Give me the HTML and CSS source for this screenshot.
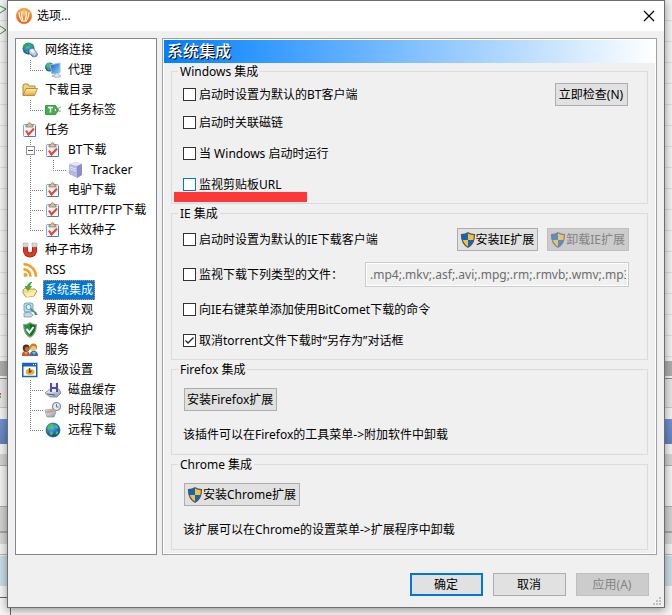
FILE: index.html
```html
<!DOCTYPE html>
<html lang="zh-CN">
  <head>
    <meta charset="utf-8">
    <title>选项...</title>
    <meta name="viewport" content="width=device-width, initial-scale=1">
    <link rel="stylesheet" href="styles.css">
  </head>
  <body>
    <!-- Icon sprite -->
    <svg class="sprite" width="0" height="0" aria-hidden="true">
      <defs>
        <radialGradient id="g-globe" cx=".4" cy=".3" r=".8">
          <stop offset="0" stop-color="#5fc0f8"/><stop offset=".6" stop-color="#1767c4"/><stop offset="1" stop-color="#0b3577"/>
        </radialGradient>
        <radialGradient id="g-logo" cx=".5" cy=".25" r=".8">
          <stop offset="0" stop-color="#ffc46a"/><stop offset=".6" stop-color="#fa7d1c"/><stop offset="1" stop-color="#dc4a10"/>
        </radialGradient>
        <linearGradient id="g-folder" x2="0" y2="1">
          <stop offset="0" stop-color="#fff3b4"/><stop offset="1" stop-color="#e5a93a"/>
        </linearGradient>
        <linearGradient id="g-metal" x2="1" y2="1">
          <stop offset="0" stop-color="#fff"/><stop offset="1" stop-color="#8492b0"/>
        </linearGradient>
        <linearGradient id="g-screen" x2="1" y2="1">
          <stop offset="0" stop-color="#1b50c8"/><stop offset="1" stop-color="#7fe0ff"/>
        </linearGradient>
      </defs>
      <symbol id="i-logo" viewBox="0 0 16 16">
        <circle cx="8" cy="8" r="7.7" fill="url(#g-logo)" stroke="#d98a50" stroke-width=".6"/>
        <path d="M3 4.500c0 3.500 1 6 2.800 8.500M6 3.500C5.400 7 5.800 10.500 7.200 13.500M10 3.500c.6 3.500.2 7-1.200 10M13 4.500c0 3.500-1 6-2.800 8.500" fill="none" stroke="#fff" stroke-width="1.200" stroke-linecap="round"/>
      </symbol>
      <symbol id="i-globe" viewBox="0 0 16 16">
        <circle cx="8" cy="8" r="7" fill="url(#g-globe)" stroke="#164884" stroke-width=".6"/>
        <path d="M2.500 5l2.500-3 3 0 0 2-2 1-1 2-2 1zM10.500 3l2 1 1 2.500-2 0-2-1.500zM4.500 9.500l3 0 .5 2-1.500 2-1.500-1zM11 9.500l2.500 0-1 2.500-2 .5z" fill="#50c43b"/>
      </symbol>
      <symbol id="i-network" viewBox="0 0 16 16">
        <circle cx="6.500" cy="6.500" r="6" fill="url(#g-globe)"/>
        <path d="M1 4l3-3 3 0 0 3-3 1-1 3zM9 2l3 3-2 2-2-2zM3 9l3 0 0 3z" fill="#38a839"/>
        <path d="M7 7l4-1 4 5 0 3-4 1-4-4z" fill="#b8d3e8" stroke="#536b89" stroke-width=".8"/>
        <path d="M8 8l3-1 2 3-3 1z" fill="#eef8ff"/>
        <path d="M8.500 12l4 2.500L16 12" fill="none" stroke="#71859b"/>
      </symbol>
      <symbol id="i-proxy" viewBox="0 0 16 16">
        <circle cx="4.500" cy="5" r="4.500" fill="url(#g-globe)"/>
        <path d="M1 3l2-2 2 0 0 3-2 2zM2 7l2-1 1 3z" fill="#4fc046"/>
        <path d="M5 3l10-2 0 9.500-8 1.500z" fill="url(#g-screen)" stroke="#a9b9d4" stroke-width="1"/>
        <path d="M10 11l3 0 1 2 2 1-4 2-5-2 3-1z" fill="#dce2ec" stroke="#8290aa" stroke-width=".6"/>
      </symbol>
      <symbol id="i-folder" viewBox="0 0 16 16">
        <path d="M1 13V3l1-1h4l1 2h6v3" fill="#f5d374" stroke="#9b752b" stroke-width=".8"/>
        <path d="M1 13.500L4 6.500h11.500l-3 7z" fill="url(#g-folder)" stroke="#a77a26" stroke-width=".8"/>
      </symbol>
      <symbol id="i-tag" viewBox="0 0 16 16">
        <path d="M0.500 3.500h10l3 4.500-3 4.500h-10z" fill="#43b04b" stroke="#27893a" stroke-width=".8"/>
        <path d="M3 5.500h5M5.500 5.500v5" stroke="#fff" stroke-width="1.500"/>
        <circle cx="10.700" cy="8" r="1" fill="#fff"/>
        <path d="M11 8c2 0 2-3 5-3M11 8c2 0 3 2 5 1" fill="none" stroke="#6b816b" stroke-width=".8"/>
      </symbol>
      <symbol id="i-task" viewBox="0 0 16 16">
        <rect x="1.500" y="2.500" width="12" height="12" rx="1" fill="#f0f4fd" stroke="#8fa3cc"/>
        <path d="M13.500 4v10.500h-11" fill="none" stroke="#4f69a0" stroke-width=".8"/>
        <path d="M4 5V3l2-.5C6 0 9 0 9 2.500l2 .5v2z" fill="#d3c299" stroke="#816f4a" stroke-width=".7"/>
        <path d="M4 8.500l2.500 4L12 6.500" fill="none" stroke="#e1472b" stroke-width="2"/>
      </symbol>
      <symbol id="i-server" viewBox="0 0 16 16">
        <path d="M1 2l7-2 6 2v11l-5 3-8-4z" fill="#b4b8e2"/>
        <path d="M1 2l7-2 6 2-5 2z" fill="#e4e6fa"/>
        <path d="M9 4l5-2v11l-5 3z" fill="#8a8fc6"/>
        <path d="M2 5l6 2M2 7l6 2" stroke="#e2e4fa"/>
      </symbol>
      <symbol id="i-magnet" viewBox="0 0 16 16">
        <path d="M3.500 1v7.500c0 6 9 6 9 0V1" fill="none" stroke="#8e1c12" stroke-width="5"/>
        <path d="M3.500 2v6.500c0 6 9 6 9 0V2" fill="none" stroke="#dd3a20" stroke-width="3.600"/>
        <path d="M1 1h5v4H1zM10 1h5v4h-5z" fill="#d8dadd" stroke="#9b9ea3" stroke-width=".5"/>
      </symbol>
      <symbol id="i-rss" viewBox="0 0 16 16">
        <circle cx="3.500" cy="13" r="2" fill="#f99b1c"/>
        <path d="M1.500 7.200a7 7 0 0 1 7 7.500M1.500 2.200a12.500 12.500 0 0 1 12.500 12.500" fill="none" stroke="#f99b1c" stroke-width="2.600"/>
      </symbol>
      <symbol id="i-integrate" viewBox="0 0 16 16">
        <path d="M1 8l2-2 3 1 7 0 2 2-3 5-8 1-3-4z" fill="url(#g-folder)" stroke="#a58434" stroke-width=".8"/>
        <path d="M1.500 10l4 1 9-3-3 6-7 1z" fill="#fff0a5"/>
        <path d="M10 0C7 1 5.500 2.500 5.500 4.500H3L6 8.500l3.500-4H7.800C7.800 3 8.500 1.500 10 0z" fill="#45b834" stroke="#278525" stroke-width=".6"/>
      </symbol>
      <symbol id="i-look" viewBox="0 0 16 16">
        <rect x="2" y="1" width="9" height="9" rx="2" fill="#b8daf3" stroke="#648bae" stroke-width=".8"/>
        <circle cx="6.500" cy="5" r="2.500" fill="#e8f7ff" stroke="#5498cd"/>
        <path d="M2 11l5-1 4 3-2 2H2z" fill="#c8d6e4" stroke="#6e879f" stroke-width=".7"/>
        <path d="M9 6l6 5-1 1-6-4z" fill="#3ba645"/><path d="M12 10l4 3-3 0z" fill="#336fad"/>
      </symbol>
      <symbol id="i-guard" viewBox="0 0 16 16">
        <path d="M8 .7c2 1.500 4 2 6.300 2C14.300 9 12 13 8 15.300 4 13 1.700 9 1.700 2.700 4 2.700 6 2.200 8 .7z" fill="#21943b" stroke="#8d9c8f" stroke-width="1.200"/>
        <path d="M8 1.500v13c3.500-2.500 5.500-6 5.500-11z" fill="#127029"/>
        <path d="M4.500 7l3 3.500L11.500 5" fill="none" stroke="#fff" stroke-width="2"/>
      </symbol>
      <symbol id="i-service" viewBox="0 0 16 16">
        <path d="M0 14c0-5 2-5 4-5s4 1 4 5z" fill="#e04a2f"/><path d="M8 14c0-5 2-5 4-5s4 1 4 5z" fill="#3565d8"/>
        <path d="M2 10l2 3 2-3M10 10l2 3 2-3" fill="#7ad847"/>
        <circle cx="4.200" cy="6" r="3.500" fill="#50321d"/><circle cx="5" cy="7" r="2.200" fill="#b8733c"/>
        <circle cx="11.500" cy="5" r="3.500" fill="#c77d24"/><circle cx="11.500" cy="6.500" r="2.600" fill="#f7c471"/>
      </symbol>
      <symbol id="i-advanced" viewBox="0 0 16 16">
        <rect x=".75" y="1.500" width="14" height="13" fill="#fff" stroke="#1365bd" stroke-width="1.500"/>
        <path d="M1 3h14" stroke="#1365bd" stroke-width="3"/><path d="M11 2.500h1M13 2.500h1" stroke="#fff"/>
        <ellipse cx="8" cy="10" rx="4.500" ry="3" fill="#e9b22e"/><path d="M7.500 6v4l2-1" fill="none" stroke="#6c420f" stroke-width="1.400"/>
      </symbol>
      <symbol id="i-disk" viewBox="0 0 16 16">
        <path d="M0 11l5-4h9l2 4-4 4H5z" fill="url(#g-metal)" stroke="#68738b" stroke-width=".7"/>
        <path d="M5 1h8v9H5z" fill="#514f9d"/><path d="M7 1h4v4H7zM7 7h4v3H7z" fill="#e8e9ff"/>
        <path d="M2 12l8 1" stroke="#53576b"/>
      </symbol>
      <symbol id="i-limit" viewBox="0 0 16 16">
        <path d="M0 8l8-1 3 3-2 5H2z" fill="url(#g-metal)" stroke="#8391a9" stroke-width=".7"/>
        <path d="M1 9l7-1 1 2-7 1z" fill="#ee8b5f"/>
        <circle cx="11.500" cy="4.500" r="4" fill="#dfeaf2" stroke="#7f8fa2" stroke-width="1.200"/><path d="M11.500 2v3h2" fill="none" stroke="#4c6275" stroke-width=".8"/>
      </symbol>
      <symbol id="i-uac" viewBox="0 0 16 16">
        <path d="M8 .7c2 1.300 4 1.900 6.500 2C14.500 9 12 13 8 15.300 4 13 1.500 9 1.500 2.700 4 2.600 6 2 8 .7z" fill="#fdbe2f"/>
        <path d="M8 .7V8H2.200C1.700 6.500 1.500 5 1.500 2.700 4 2.600 6 2 8 .7zM8 8h5.800c-.8 3-2.800 5.500-5.800 7.300z" fill="#0a66cc"/>
        <path d="M8 .7c2 1.300 4 1.900 6.500 2C14.500 9 12 13 8 15.300 4 13 1.500 9 1.500 2.700 4 2.600 6 2 8 .7z" fill="none" stroke="#4d5560" stroke-width="1.200"/>
      </symbol>
    </svg>

    <div class="dialog">
      <header class="titlebar">
        <svg class="icon"><use href="#i-logo"/></svg>
        <h1 class="titlebar__title">选项...</h1>
        <button class="titlebar__close" type="button" aria-label="关闭">
          <svg width="12" height="12" viewBox="0 0 12 12"><path d="M1 1l10 10M11 1L1 11" stroke="#000" stroke-width="1.200"/></svg>
        </button>
      </header>

      <div class="content">
        <nav class="tree">
          <ul>
            <li>
              <a href="#"><svg class="icon"><use href="#i-network"/></svg><span>网络连接</span></a>
              <ul>
                <li><a href="#"><svg class="icon"><use href="#i-proxy"/></svg><span>代理</span></a></li>
              </ul>
            </li>
            <li>
              <a href="#"><svg class="icon"><use href="#i-folder"/></svg><span>下载目录</span></a>
              <ul>
                <li><a href="#"><svg class="icon"><use href="#i-tag"/></svg><span>任务标签</span></a></li>
              </ul>
            </li>
            <li>
              <a href="#"><svg class="icon"><use href="#i-task"/></svg><span>任务</span></a>
              <ul>
                <li>
                  <button class="tree__toggle" type="button" aria-label="折叠"></button>
                  <a href="#"><svg class="icon"><use href="#i-task"/></svg><span>BT下载</span></a>
                  <ul>
                    <li><a href="#"><svg class="icon"><use href="#i-server"/></svg><span>Tracker</span></a></li>
                  </ul>
                </li>
                <li><a href="#"><svg class="icon"><use href="#i-task"/></svg><span>电驴下载</span></a></li>
                <li><a href="#"><svg class="icon"><use href="#i-task"/></svg><span>HTTP/FTP下载</span></a></li>
                <li><a href="#"><svg class="icon"><use href="#i-task"/></svg><span>长效种子</span></a></li>
              </ul>
            </li>
            <li><a href="#"><svg class="icon"><use href="#i-magnet"/></svg><span>种子市场</span></a></li>
            <li><a href="#"><svg class="icon"><use href="#i-rss"/></svg><span>RSS</span></a></li>
            <li><a class="is-selected" href="#"><svg class="icon"><use href="#i-integrate"/></svg><span>系统集成</span></a></li>
            <li><a href="#"><svg class="icon"><use href="#i-look"/></svg><span>界面外观</span></a></li>
            <li><a href="#"><svg class="icon"><use href="#i-guard"/></svg><span>病毒保护</span></a></li>
            <li><a href="#"><svg class="icon"><use href="#i-service"/></svg><span>服务</span></a></li>
            <li>
              <a href="#"><svg class="icon"><use href="#i-advanced"/></svg><span>高级设置</span></a>
              <ul>
                <li><a href="#"><svg class="icon"><use href="#i-disk"/></svg><span>磁盘缓存</span></a></li>
                <li><a href="#"><svg class="icon"><use href="#i-limit"/></svg><span>时段限速</span></a></li>
                <li><a href="#"><svg class="icon"><use href="#i-globe"/></svg><span>远程下载</span></a></li>
              </ul>
            </li>
          </ul>
        </nav>

        <main class="panel">
          <h2 class="panel__title">系统集成</h2>

          <fieldset class="group group--windows">
            <legend>Windows 集成</legend>
            <div class="row row--tight">
              <label class="check"><input type="checkbox">启动时设置为默认的BT客户端</label>
              <button class="button button--fixed" type="button">立即检查(N)</button>
            </div>
            <div class="row">
              <label class="check"><input type="checkbox">启动时关联磁链</label>
            </div>
            <div class="row">
              <label class="check"><input type="checkbox">当 Windows 启动时运行</label>
            </div>
            <div class="row">
              <label class="check check--marked"><input class="is-hot" type="checkbox">监视剪贴板URL</label>
            </div>
          </fieldset>

          <fieldset class="group group--ie">
            <legend>IE 集成</legend>
            <div class="row row--loose">
              <label class="check"><input type="checkbox">启动时设置为默认的IE下载客户端</label>
              <div class="row__buttons">
                <button class="button" type="button"><svg class="icon"><use href="#i-uac"/></svg>安装IE扩展</button>
                <button class="button" type="button" disabled><svg class="icon"><use href="#i-uac"/></svg>卸载IE扩展</button>
              </div>
            </div>
            <div class="row row--loose">
              <label class="check"><input type="checkbox">监视下载下列类型的文件：</label>
              <input class="textbox" type="text" aria-label="文件类型" value=".mp4;.mkv;.asf;.avi;.mpg;.rm;.rmvb;.wmv;.mp3" disabled>
            </div>
            <div class="row">
              <label class="check"><input type="checkbox">向IE右键菜单添加使用BitComet下载的命令</label>
            </div>
            <div class="row">
              <label class="check"><input type="checkbox" checked>取消torrent文件下载时“另存为”对话框</label>
            </div>
          </fieldset>

          <fieldset class="group group--addon">
            <legend>Firefox 集成</legend>
            <button class="button" type="button">安装Firefox扩展</button>
            <p>该插件可以在Firefox的工具菜单-&gt;附加软件中卸载</p>
          </fieldset>

          <fieldset class="group group--addon">
            <legend>Chrome 集成</legend>
            <button class="button" type="button"><svg class="icon"><use href="#i-uac"/></svg>安装Chrome扩展</button>
            <p>该扩展可以在Chrome的设置菜单-&gt;扩展程序中卸载</p>
          </fieldset>
        </main>
      </div>

      <footer class="actions">
        <button class="button button--fixed button--default" type="submit">确定</button>
        <button class="button button--fixed" type="button">取消</button>
        <button class="button button--fixed" type="button" disabled>应用(A)</button>
      </footer>
      <svg class="grip" width="8" height="8" viewBox="0 0 8 8"><path d="M6 0h2v2H6zM3 3h2v2H3zM6 3h2v2H6zM0 6h2v2H0zM3 6h2v2H3zM6 6h2v2H6z" fill="#bfbfbf"/></svg>
    </div>
  </body>
</html>
```
FILE: styles.css
```css
/* Base */
* {
  box-sizing: border-box;
}

/* The window behind the dialog */
body {
  background-color: #f0f0f0;
  background-image:
    url("data:image/svg+xml,%3Csvg xmlns='http://www.w3.org/2000/svg' width='12' height='615'%3E%3Cpath d='M0 6l6 3-6 4M0 26l6 4-6 4' fill='none' stroke='%233b8a3b'/%3E%3Cpath d='M0 393h1v2h-1z' fill='%23e8502c'/%3E%3Cpath d='M0 396h1v2h-1z' fill='%2348b848'/%3E%3Cpath d='M0 597.500h7M10.500 608v7' stroke='%23666'/%3E%3C/svg%3E"),
    linear-gradient(transparent 361px, #acacac 361px 376px, #f0f0f0 376px 378px, #888 378px 379px, #e2e2e2 379px 407px, #c4c4c4 407px 408px, #f0f0f0 408px 419px, #7090cc 419px, #6280bc 444px, #f0f0f0 444px 454px, #d0d0d0 454px 465px, #aaa 465px 466px, #f0f0f0 466px 506px, #aaa 506px 507px, #d0d0d0 507px 531px, #a4a4a4 531px 533px, #d4d4d4 533px 544px, #f0f0f0 544px 554px, #b0b0b0 554px 555px, #f0f0f0 555px 556px, #c8dae2 556px 586px, #f4f4f4 586px),
    repeating-linear-gradient(#f0f0f0 0 20px, #dadada 20px 21px);
  background-repeat: no-repeat;
  color: #000;
  font-family: "Noto Sans", "Noto Sans CJK SC", sans-serif;
  font-size: 12px;
  line-height: 16px;
  margin: 0;
  padding: 0 7px 7px;
}

button,
input {
  font: inherit;
}

ul {
  list-style: none;
  margin: 0;
  padding: 0;
}

.sprite {
  position: absolute;
}

.icon {
  display: block;
  flex: none;
  height: 16px;
  width: 16px;
}

/* Dialog */
.dialog {
  background: #f0f0f0;
  border: 1px solid #6e6e6e;
  box-shadow: 0 2px 8px rgba(0,0,0,0.4);
  position: relative;
}

.titlebar {
  align-items: center;
  background: #fff;
  display: flex;
  gap: 5px;
  height: 30px;
  padding: 0 9px 0 8px;
}

.titlebar__title {
  flex: 1;
  font-size: 12px;
  font-weight: normal;
  margin: 0;
}

.titlebar__close {
  background: none;
  border: 0;
  display: flex;
  padding: 0;
}

.content {
  display: flex;
  gap: 5px;
  padding: 7px 7px 0;
}

/* Tree */
.tree {
  background: #fff;
  border: 1px solid #828790;
  flex: none;
  padding: 1px 0 1px 6px;
  width: 142px;
}

.tree a {
  align-items: center;
  color: inherit;
  display: flex;
  gap: 5px;
  height: 20px;
  text-decoration: none;
  white-space: nowrap;
}

.tree span {
  border: 1px solid transparent;
  line-height: 18px;
  padding: 0 1px;
}

.tree ul ul {
  margin-left: 8px;
}

.tree li li {
  background-image:
    repeating-linear-gradient(#808080 0 1px, transparent 1px 2px),
    repeating-linear-gradient(to right, #808080 0 1px, transparent 1px 2px);
  background-position: 0 0, 0 10px;
  background-repeat: no-repeat;
  background-size: 1px 100%, 13px 1px;
  padding-left: 15px;
  position: relative;
}

.tree li li:last-child {
  background-size: 1px 10px, 13px 1px;
}

.tree .is-selected span {
  background: #0078d7;
  border: 1px dotted #ff8728;
  color: #fff;
}

.tree__toggle {
  background: linear-gradient(#3c5a96, #3c5a96) center / 5px 1px no-repeat #fff;
  border: 1px solid #919191;
  height: 9px;
  left: -4px;
  padding: 0;
  position: absolute;
  top: 6px;
  width: 9px;
}

/* Panel */
.panel {
  border: 1px solid #a0a0a6;
  box-shadow: inset 0 0 0 1px #fff;
  display: flex;
  flex: 1;
  flex-direction: column;
  gap: 1px;
  min-width: 0;
  padding: 1px 1px 4px;
}

.panel__title {
  background: linear-gradient(to right, #0080ff, #fff);
  color: #fff;
  font-size: 16px;
  font-weight: 500;
  line-height: 23px;
  margin: 0 0 -1px;
  padding: 0 3px;
  text-shadow: 1px 1px 0 #000;
}

.group {
  border: 1px solid #dcdcdc;
  margin: 0 7px;
  min-width: 0;
  padding: 3px 19px 7px 11px;
}

.group legend {
  line-height: 17px;
  margin-left: -5px;
  padding: 0 2px;
}

.group p {
  line-height: 23px;
  margin: 12px 0 0;
}

.group--ie {
  padding: 6px 18px 7px 11px;
}

.group--addon {
  padding: 10px 18px 8px 11px;
}

.group--addon .button {
  display: flex;
  margin-left: 1px;
}

.row {
  align-items: center;
  display: flex;
  justify-content: space-between;
  min-height: 23px;
}

.row + .row {
  margin-top: 8px;
}

.row--tight + .row {
  margin-top: 5px;
}

.row--loose + .row {
  margin-top: 11px;
}

.row__buttons {
  display: flex;
  gap: 9px;
}

.check {
  align-items: center;
  display: flex;
  gap: 3px;
  position: relative;
  white-space: nowrap;
}

.check input {
  appearance: none;
  background: #fff;
  border: 1px solid #333;
  height: 13px;
  margin: 0;
  width: 13px;
}

.check input:checked {
  background: #fff url("data:image/svg+xml,%3Csvg xmlns='http://www.w3.org/2000/svg' width='11' height='11'%3E%3Cpath d='M1.500 5.500l2.500 2.500 5.500-5.500' fill='none' stroke='%23222' stroke-width='1.300'/%3E%3C/svg%3E") center no-repeat;
}

.check input.is-hot {
  border-color: #0078d7;
}

.check--marked::after {
  background: #fc3838;
  content: "";
  height: 10px;
  left: -9px;
  position: absolute;
  top: 15px;
  width: 133px;
}

.textbox {
  background: #f0f0f0;
  border: 1px solid #ccc;
  box-shadow: inset 0 0 0 1px #fff;
  color: #6d6d6d;
  height: 25px;
  padding: 0 2px 0 4px;
  width: 264px;
}

/* Buttons */
.button {
  align-items: center;
  background: #e1e1e1;
  border: 1px solid #adadad;
  color: #000;
  display: flex;
  height: 23px;
  justify-content: center;
  padding: 0 3px 0 2px;
  white-space: nowrap;
}

.button:disabled {
  background: #ccc;
  border-color: #bfbfbf;
  color: #838383;
}

.button:disabled .icon {
  opacity: 0.6;
}

.button--fixed {
  width: 73px;
}

.button--default {
  border: 2px solid #0078d7;
}

.actions {
  display: flex;
  gap: 10px;
  justify-content: flex-end;
  padding: 18px 15px 11px;
}

.grip {
  bottom: 2px;
  position: absolute;
  right: 3px;
}
```
